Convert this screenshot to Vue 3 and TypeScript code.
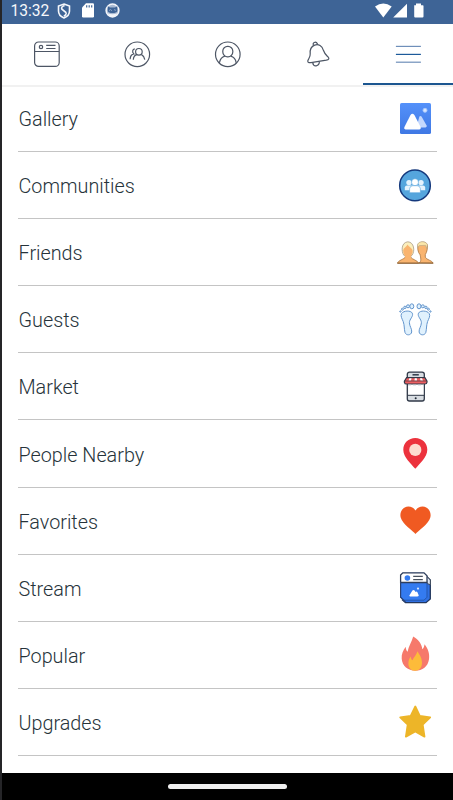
<script setup lang="ts">
type Item = { id: string; label: string }

const items: Item[] = [
  { id: 'gallery', label: 'Gallery' },
  { id: 'communities', label: 'Communities' },
  { id: 'friends', label: 'Friends' },
  { id: 'guests', label: 'Guests' },
  { id: 'market', label: 'Market' },
  { id: 'nearby', label: 'People Nearby' },
  { id: 'favorites', label: 'Favorites' },
  { id: 'stream', label: 'Stream' },
  { id: 'popular', label: 'Popular' },
  { id: 'upgrades', label: 'Upgrades' },
]
</script>

<template>
  <div class="device">
    <header class="status">
      <span class="clock">13:32</span>
      <svg class="shield" width="14" height="16" viewBox="0 0 14 16">
        <path d="M7 1 12.5 3V8C12.5 11.3 10 13.8 7 15 4 13.8 1.5 11.3 1.5 8V3Z" fill="none" stroke="#f4f6fa" stroke-width="1.6" />
        <path d="M7.6 2.6C5.2 3.4 4 4.6 4.8 6 5.6 7.4 9.4 8.8 9.2 10.4 9 11.6 8 12.6 6.8 13.2" fill="none" stroke="#f4f6fa" stroke-width="1.6" />
      </svg>
      <svg class="sd" width="12" height="15" viewBox="0 0 12 15">
        <path d="M4 .3H10.8Q12 .3 12 1.5V13.3Q12 14.5 10.8 14.5H1.2Q0 14.5 0 13.3V4.5Z" fill="#fff" />
        <path d="M4.7 2.2V4.6M7.2 2.2V4.6M9.7 2.2V4.6" stroke="#3e6496" stroke-width="1.2" />
      </svg>
      <svg class="cat" width="15" height="15" viewBox="0 0 15 15">
        <circle cx="7.5" cy="7.5" r="6.4" fill="#a9bad3" stroke="#f4f6fa" stroke-width="1.5" />
        <path d="M2.8 3.3 5 4.6H10L12.3 3.3V8C12 9.4 10 10 7.5 10S3 9.4 2.8 8Z" fill="#3e6496" />
        <path d="M4 7.6 5.5 6.6 7 7.8M9 6.6 11 7.4" fill="none" stroke="#9fb3d0" stroke-width=".8" />
        <path d="M2.5 10.2Q7.5 12.5 12.5 10.2 10.5 13.8 7.5 13.8T2.5 10.2Z" fill="#f4f6fa" />
      </svg>
      <span class="spacer"></span>
      <svg width="49" height="16" viewBox="0 0 49 16">
        <path d="M0 3.6Q8.3-2.4 16.7 3.6L8.3 14.4Z" fill="#fff" />
        <path d="M18.2 14.5 32 .8V14.5Z" fill="#fff" />
        <path d="M39.2 2.3H41V.6H46V2.3H47.8Q48.5 2.3 48.5 3V13.6Q48.5 14.6 47.5 14.6H40.2Q39.2 14.6 39.2 13.6Z" fill="#fff" />
      </svg>
    </header>

    <nav class="tabs">
      <a class="tab">
        <svg width="28" height="28" viewBox="0 0 28 28">
          <rect x="1.6" y="2" width="24.6" height="24.4" rx="4" />
          <path d="M1.6 11.5H26.2M13.2 5.4H22.5M13.2 8.5H22.5" />
          <circle cx="8" cy="7" r="1.7" />
        </svg>
      </a>
      <a class="tab">
        <svg width="28" height="28" viewBox="0 0 28 28">
          <circle cx="14.3" cy="14.3" r="12.3" />
          <circle cx="15.9" cy="11.8" r="3.3" />
          <path d="M10.3 19.8C10.5 16.3 12.2 15 14 14.7M18.5 14.6C20.5 15.6 21.4 17.3 21.8 19.6M11.8 8.8C9.3 9.1 9 12.3 10.8 13.9 8.7 14.3 7.3 16.3 7.1 19.3" />
        </svg>
      </a>
      <a class="tab">
        <svg width="28" height="28" viewBox="0 0 28 28">
          <circle cx="13.8" cy="14.3" r="12.3" />
          <rect x="8.8" y="6.3" width="10" height="10.5" rx="4.8" />
          <path d="M5.4 22.8C6.1 19 8.4 16.9 10.9 16.2M16.7 16.2C19.4 16.9 21.6 19 22.2 22.8" />
        </svg>
      </a>
      <a class="tab">
        <svg width="28" height="28" viewBox="0 0 28 28">
          <path d="M10.7 5.1C6.8 6.5 5.8 9.8 6.2 13.9 6.5 17.3 4.2 18.9 3.8 20.9 3.6 22.6 5 22.9 7 22.6L22.3 20.2C25 19.7 25.4 18.3 24.2 17.1 22 15 20.5 13.9 19.4 10.3 18.2 5.8 14.6 3.8 10.7 5.1Z" />
          <path d="M9.5 5.3C8 2.8 11.8.6 13.6 4.1M8.7 22.6C9.4 27.3 15.2 26.8 15.4 21.6" />
        </svg>
      </a>
      <a class="tab active">
        <svg width="28" height="28" viewBox="0 0 28 28">
          <path class="soft" d="M1.9 6.4H26.9" />
          <path class="strong" d="M1.9 14.4H26.9" />
          <path class="soft" d="M1.9 22.2H26.9" />
        </svg>
      </a>
    </nav>

    <main class="list">
      <a v-for="item in items" :key="item.id" class="row">
        <span class="label">{{ item.label }}</span>
        <svg class="pic" width="38" height="38" viewBox="0 0 38 38">
          <template v-if="item.id === 'gallery'">
            <defs>
              <linearGradient id="sky" x1="0" y1="0" x2="0" y2="1">
                <stop offset="0" stop-color="#5491fa" />
                <stop offset="1" stop-color="#3f78e4" />
              </linearGradient>
            </defs>
            <rect x="3" y="3" width="31" height="31" rx="1.6" fill="url(#sky)" />
            <path d="M19.5 27.5 22.3 16.8Q23.4 15 24.7 16.8L29.6 25.6Q30.3 27.3 28.5 27.4Z" fill="#c4d8fd" />
            <path d="M7.3 27.2 13.5 15Q15.4 12.4 17.4 15L23.6 27Q24.3 29.2 22.2 29.4H8.5Q6.6 29.2 7.3 27.2Z" fill="#fff" />
            <circle cx="28" cy="10.3" r="2" fill="#d8e7ff" stroke="#a8c7fc" stroke-width="1" />
          </template>

          <template v-else-if="item.id === 'communities'">
            <circle cx="18" cy="18.4" r="15.3" fill="#55a5dd" stroke="#14387c" stroke-width="1.5" />
            <g fill="#e6f3fd">
              <circle cx="12" cy="15.6" r="2.7" />
              <circle cx="24" cy="15.6" r="2.7" />
              <path d="M7.8 23.3V20.4Q8 18.7 10 18.6H26Q28 18.7 28.2 20.4V23.3Z" />
            </g>
            <circle cx="18" cy="15.2" r="3.5" fill="#fff" stroke="#55a5dd" stroke-width=".6" />
            <path d="M12.6 25.7V21.7Q13 18.8 15.8 18.7H20.2Q23 18.8 23.4 21.7V25.7Z" fill="#fff" stroke="#55a5dd" stroke-width=".6" />
          </template>

          <template v-else-if="item.id === 'friends'">
            <path d="M22 29C25 27.5 23.4 23 23.2 20.9 20.7 18.2 20.4 14 21 10.5 22.5 7 29 7.3 30.2 10.5 30.8 14 30 18 28.3 20.6V23.2C29.5 25.9 35 26.3 36.3 29.2Z" fill="#f9b46f" stroke="#a8743d" stroke-width=".8" />
            <path d="M20.7 13.5V10C22.5 6.8 29 7.2 30.3 10.3L29.8 14.5 28.5 11.3 22.3 11.6Z" fill="#fae6a9" stroke="#aaa086" stroke-width=".5" />
            <path d="M.4 29.3C1 26.3 7 25.4 8.5 23V20.7H13.7V23C15 25.6 20.7 26.3 21.8 29.3Z" fill="#f9b46f" stroke="#a8743d" stroke-width=".8" />
            <path d="M6.8 21.3C4 17 4.4 8.3 10.8 7.8 17 8 18.3 17 15 21.3L13 22.3H8.8Z" fill="#fbefbd" stroke="#a99b86" stroke-width=".8" />
            <path d="M6.2 17C6.2 14 9 13.6 10.6 10.6 12 13.6 15.7 14 15.7 17.5 15.4 20 13.9 21.6 13.7 24H8.3C8.3 21.5 6.3 20.3 6.2 17Z" fill="#f9b46f" />
            <path d="M.5 29.1H36" stroke="#74502c" stroke-width=".8" />
          </template>

          <template v-else-if="item.id === 'guests'">
            <g v-for="side in 2" :key="side" :transform="side === 2 ? 'matrix(-1 0 0 1 36.8 0)' : undefined" fill="#e0f1fd" stroke="#6395cd" stroke-width="1">
              <path d="M4.6 12.5C6.6 9.4 13.8 9.2 15.3 12.2 16.7 15.5 12.4 18 12.4 21.7 12.5 25.4 15.1 27.9 14.7 31 14.1 34.6 9 34.7 8 31.5 7 27.5 7.6 24.6 6.2 20.5 5 17.5 3.2 15 4.6 12.5Z" />
              <ellipse cx="14.8" cy="5.3" rx="2" ry="2.5" />
              <circle cx="11" cy="5.3" r="1.5" />
              <circle cx="7.9" cy="6.4" r="1.2" />
              <circle cx="5.4" cy="8.2" r="1" />
              <circle cx="3.4" cy="10.5" r=".7" />
            </g>
          </template>

          <template v-else-if="item.id === 'market'">
            <rect x="10.3" y="4.1" width="17" height="28.9" rx="2.2" fill="#d8dde2" stroke="#303948" stroke-width="1.3" />
            <path d="M15.5 6.8H21.8" stroke="#303948" stroke-width="1.5" />
            <rect x="11.2" y="15.8" width="15.3" height="11.2" fill="#fff" />
            <path d="M10.5 27.3H27" stroke="#303948" />
            <circle cx="18.7" cy="30.2" r="1" fill="#222b38" />
            <path d="M9.6 9.7H27.9L30 13.2V14.3Q29.8 16 27.9 16H9.5Q7.7 16 7.4 14.3V13.2Z" fill="#ee5f61" stroke="#303948" stroke-width="1.2" />
            <path d="M12.4 10.3H14.5L14 12.7H11.6ZM17.7 10.3H19.8L20 12.7H17.5ZM23 10.3H25.1L26 12.7H23.5Z" fill="#fff" />
            <path d="M7.8 13H29.7" stroke="#533743" stroke-width=".8" />
            <path d="M11 16.8H26.5" stroke="#aeb4bd" stroke-dasharray="3 2" />
          </template>

          <template v-else-if="item.id === 'nearby'">
            <path d="M18.3 3C25 3 30.3 8 30.3 14.7 30.3 22 22.4 29 18.3 33.8 14.2 29 6.3 22 6.3 14.7 6.3 8 11.6 3 18.3 3Z" fill="#ec323d" />
            <circle cx="18.3" cy="14.9" r="6.1" fill="#fddbd0" />
          </template>

          <path v-else-if="item.id === 'favorites'" d="M18.5 32.1C16.5 29.6 5.4 22 3.7 15.6 2.2 9.7 6.2 4.6 11.4 4.6 14.5 4.6 17.2 6.1 18.5 8.6 19.8 6.1 22.5 4.6 25.6 4.6 30.8 4.6 34.8 9.7 33.3 15.6 31.6 22 20.5 29.6 18.5 32.1Z" fill="#f05a22" />

          <template v-else-if="item.id === 'stream'">
            <path d="M28.5 6.5 33.3 11V30L29 33.7H8.5L5 30.5" fill="#2f70e2" stroke="#22375d" stroke-width="1.3" />
            <path d="M29 6.5 33.3 11V15.7L30 14.5Z" fill="#dce6f7" stroke="#3c4656" stroke-width="1" />
            <path d="M5.8 3.8H27L30 6.7V28.2L27 31.2H6.6L3.6 28.2V6.1Z" fill="#347bf0" />
            <path d="M30 14V28.2L27 31.2H6.6L3.6 28.2" fill="none" stroke="#2557ad" stroke-width="1" />
            <path d="M3.6 13.5V6.1L5.8 3.8H27L30 6.7V13.5Z" fill="#fff" stroke="#303f5b" stroke-width="1.3" />
            <path d="M3.6 13V28.2L8.5 33.2" fill="none" stroke="#2c4374" stroke-width="1.2" />
            <circle cx="10.4" cy="9" r="2.8" fill="#347bf0" />
            <path d="M16.2 7.4H25.8M16.2 10.6H25.8" stroke="#48515f" stroke-width="1.1" />
            <path d="M12.2 26.8 15.4 21.6Q16.5 20.4 17.6 21.6L18.5 23Q19.4 22 20.3 23.1L21.8 26.4Q21.4 27.5 20.2 27.5H13Z" fill="#fff" />
            <circle cx="21" cy="19.6" r="1.1" fill="#d9e8ff" />
          </template>

          <template v-else-if="item.id === 'popular'">
            <path d="M16.2 .5C21.5 3.5 24.8 8 25.3 13.2 26.8 12 27.4 10 27.5 8.2 31.2 12.4 32.8 18 32 23.2 31 30.6 25.5 34.4 18.3 34.8 11 34.5 5.2 30 4.7 22.7 4.3 18.3 6 14.4 8.8 10.8 8.8 13 9.2 14.5 10.6 15.8 11.4 10.3 14.7 6.3 16.2.5Z" fill="#f6796b" />
            <path d="M20.4 15.2C22.3 18.5 25 21.5 25 27 25 31.5 22.2 34.7 18 34.8 13.7 34.6 11.4 31.5 11.4 27.5 11.4 25 12.2 22.4 13.8 20.5 13.9 22.4 14.5 23.7 15.5 24.3 16.7 20.8 19.6 19 20.4 15.2Z" fill="#fdbb3a" />
          </template>

          <path v-else d="M18.3 3.5 22.8 12.9 33.2 14.4 25.7 21.7 27.5 33.6 18.3 28.5 8.9 33.6 10.7 21.7 3.2 14.4 13.7 12.9Z" fill="#edb528" stroke="#edb528" stroke-width="1.8" stroke-linejoin="round" />
        </svg>
      </a>
    </main>

    <footer class="gesture"><span class="pill"></span></footer>
  </div>
</template>

<style>
body {
  margin: 0;
  background: #fff;
}
</style>

<style scoped>
.device {
  box-sizing: border-box;
  width: 453px;
  height: 800px;
  overflow: hidden;
  display: flex;
  flex-direction: column;
  border-left: 2px solid #252528;
  background: #fff;
  font-family: Roboto, "Liberation Sans", sans-serif;
}
svg {
  display: block;
  flex: none;
}
.status {
  box-sizing: border-box;
  flex: none;
  height: 24px;
  display: flex;
  align-items: flex-start;
  padding: 3px 29px 0 8.5px;
  background: #3e6496;
}
.clock {
  width: 39px;
  font-size: 15.6px;
  line-height: 17px;
  color: #f6f8fb;
}
.shield {
  margin-left: 7.5px;
}
.sd {
  margin-left: 11px;
}
.cat {
  margin-left: 11px;
}
.spacer {
  flex: 1;
}
.tabs {
  box-sizing: border-box;
  flex: none;
  height: 63px;
  display: flex;
  border-bottom: 2px solid #f1f1f1;
}
.tab {
  box-sizing: border-box;
  flex: 1;
  height: 61px;
  display: flex;
  justify-content: center;
  padding-top: 16px;
}
.tab svg {
  fill: none;
  stroke: #4d5665;
  stroke-width: 1.2;
}
.tab.active {
  border-bottom: 2px solid #1c5690;
}
.tab.active .soft {
  stroke: #6f8fba;
}
.tab.active .strong {
  stroke: #1c5a9a;
}
.list {
  flex: 1;
  padding: 0 16px;
  margin-top: -2px;
}
.row {
  box-sizing: border-box;
  height: 67.1px;
  display: flex;
  align-items: center;
  justify-content: space-between;
  padding: 1px 2px 0 0;
  border-bottom: 1px solid #c4c4c4;
}
.label {
  padding: 3px 0 0 0.5px;
  font-size: 19.8px;
  font-weight: 300;
  line-height: 24px;
  color: #26333a;
}
.gesture {
  flex: none;
  height: 27px;
  display: flex;
  justify-content: center;
  background: #000;
}
.pill {
  width: 119px;
  height: 5px;
  margin: 11px 1px 0 0;
  border-radius: 2.5px;
  background: #efefef;
}
</style>
